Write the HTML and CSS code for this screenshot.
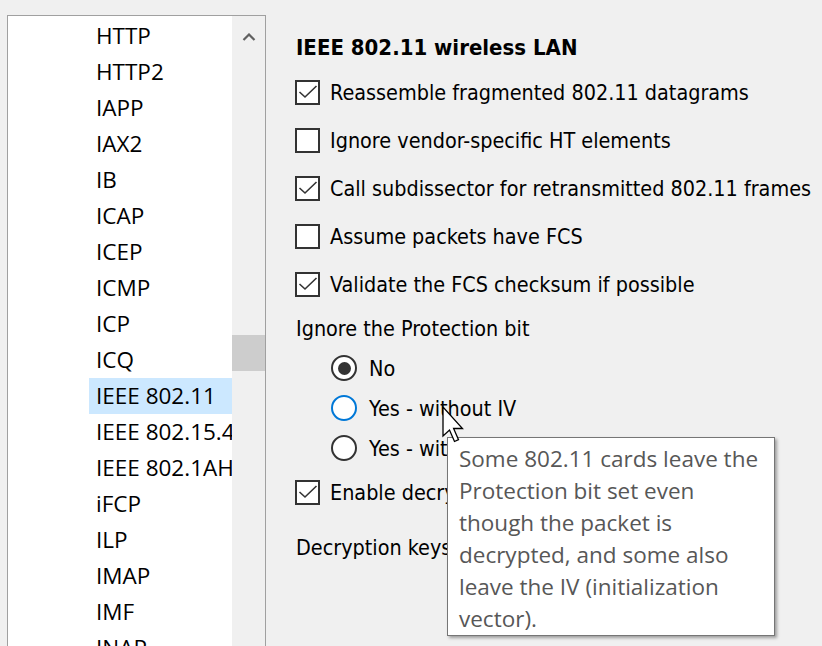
FILE: index.html
```html
<!DOCTYPE html>
<html>
<head>
<meta charset="utf-8">
<link rel="stylesheet" href="styles.css">
</head>
<body>
<div class="window">
  <div class="sidebar">
    <ul class="list">
      <li class="item">HTTP</li>
      <li class="item">HTTP2</li>
      <li class="item">IAPP</li>
      <li class="item">IAX2</li>
      <li class="item">IB</li>
      <li class="item">ICAP</li>
      <li class="item">ICEP</li>
      <li class="item">ICMP</li>
      <li class="item">ICP</li>
      <li class="item">ICQ</li>
      <li class="item selected">IEEE 802.11</li>
      <li class="item">IEEE 802.15.4</li>
      <li class="item">IEEE 802.1AH</li>
      <li class="item">iFCP</li>
      <li class="item">ILP</li>
      <li class="item">IMAP</li>
      <li class="item">IMF</li>
      <li class="item">INAP</li>
    </ul>
    <div class="scrollbar">
      <svg class="arrow-up" width="14" height="8" viewBox="0 0 14 8"><path d="M1.5 7 L7 1.5 L12.5 7" fill="none" stroke="#606060" stroke-width="2.2"/></svg>
      <div class="thumb"></div>
    </div>
  </div>

  <div class="content">
    <div class="heading">IEEE 802.11 wireless LAN</div>

    <div class="row check-row">
      <span class="box"><svg width="21" height="21" viewBox="0 0 21 21"><path d="M2.5 10 L8 15 L19.5 4" fill="none" stroke="#333" stroke-width="1.6"/></svg></span>
      <span class="label">Reassemble fragmented 802.11 datagrams</span>
    </div>
    <div class="row check-row">
      <span class="box"></span>
      <span class="label">Ignore vendor-specific HT elements</span>
    </div>
    <div class="row check-row">
      <span class="box"><svg width="21" height="21" viewBox="0 0 21 21"><path d="M2.5 10 L8 15 L19.5 4" fill="none" stroke="#333" stroke-width="1.6"/></svg></span>
      <span class="label">Call subdissector for retransmitted 802.11 frames</span>
    </div>
    <div class="row check-row">
      <span class="box"></span>
      <span class="label">Assume packets have FCS</span>
    </div>
    <div class="row check-row">
      <span class="box"><svg width="21" height="21" viewBox="0 0 21 21"><path d="M2.5 10 L8 15 L19.5 4" fill="none" stroke="#333" stroke-width="1.6"/></svg></span>
      <span class="label">Validate the FCS checksum if possible</span>
    </div>

    <div class="row group-label">Ignore the Protection bit</div>

    <div class="row radio-row">
      <span class="radio checked"><span class="dot"></span></span>
      <span class="label">No</span>
    </div>
    <div class="row radio-row">
      <span class="radio hover"></span>
      <span class="label">Yes - without IV</span>
    </div>
    <div class="row radio-row">
      <span class="radio"></span>
      <span class="label">Yes - with IV</span>
    </div>

    <div class="row check-row">
      <span class="box"><svg width="21" height="21" viewBox="0 0 21 21"><path d="M2.5 10 L8 15 L19.5 4" fill="none" stroke="#333" stroke-width="1.6"/></svg></span>
      <span class="label">Enable decryption</span>
    </div>

    <div class="row keys-label">Decryption keys</div>
  </div>

  <div class="tooltip">Some 802.11 cards leave the<br>Protection bit set even<br>though the packet is<br>decrypted, and some also<br>leave the IV (initialization<br>vector).</div>

  <svg class="cursor" width="26" height="38" viewBox="0 0 26 38">
    <path d="M1 1 L1 30 L7.5 24 L12.5 35.5 L16.5 33.7 L11.6 22.5 L20.5 22.5 Z" fill="#fff" stroke="#000" stroke-width="1.3" stroke-linejoin="miter"/>
  </svg>
</div>
</body>
</html>
```

FILE: styles.css
```css
html, body {
  margin: 0;
  padding: 0;
  background: #f0f0f0;
  overflow: hidden;
}

.window {
  position: relative;
  width: 822px;
  height: 646px;
  display: flex;
  align-items: flex-start;
  padding: 15px 0 0 7px;
  box-sizing: border-box;
}

/* ---------- left list ---------- */
.sidebar {
  flex: none;
  display: flex;
  width: 259px;
  height: 660px;
  border: 1px solid #a0a0a0;
  box-sizing: border-box;
  background: #fff;
}

.list {
  list-style: none;
  margin: 0;
  padding: 2px 0 0 0;
  width: 224px;
  flex: none;
  overflow: hidden;
  font-family: "Open Sans", "Noto Sans", sans-serif;
  font-size: 22.5px;
  color: #000;
}

.item {
  height: 36px;
  line-height: 35px;
  margin-left: 81px;
  padding-left: 7px;
  white-space: nowrap;
}

.item.selected {
  background: #cce8ff;
}

.scrollbar {
  flex: 1;
  background: #f0f0f0;
  display: flex;
  flex-direction: column;
  align-items: center;
}

.arrow-up {
  margin-top: 17px;
  display: block;
}

.thumb {
  align-self: stretch;
  margin-top: 294px;
  height: 36px;
  background: #cdcdcd;
}

/* ---------- right content ---------- */
.content {
  margin-left: 29px;
  display: flex;
  flex-direction: column;
  font-family: "DejaVu Sans Condensed", "DejaVu Sans", sans-serif;
  font-stretch: condensed;
  font-size: 21.4px;
  color: #000;
}

.heading {
  height: 36px;
  line-height: 36px;
  font-weight: bold;
  font-size: 22px;
  margin-top: 15px;
  margin-left: 1px;
  margin-bottom: 2px;
}

.row {
  display: flex;
  align-items: center;
  white-space: nowrap;
}

.check-row {
  height: 48px;
}

.box {
  flex: none;
  width: 25px;
  height: 25px;
  border: 2px solid #333;
  box-sizing: border-box;
  background: #fff;
  margin-right: 10px;
  display: flex;
}

.box svg {
  display: block;
}

.group-label {
  height: 40px;
  margin-left: 1px;
}

.radio-row {
  height: 40px;
  padding-left: 36px;
}

.radio {
  flex: none;
  width: 26px;
  height: 26px;
  border: 2px solid #333;
  border-radius: 50%;
  box-sizing: border-box;
  background: #fff;
  margin-right: 12px;
  display: flex;
  align-items: center;
  justify-content: center;
}

.radio.hover {
  border-color: #0078d7;
}

.dot {
  width: 13px;
  height: 13px;
  border-radius: 50%;
  background: #333;
}

.keys-label {
  height: 46px;
  margin-top: 8px;
  margin-left: 1px;
}

/* ---------- tooltip & cursor ---------- */
.tooltip {
  position: absolute;
  left: 447px;
  top: 437px;
  width: 328px;
  height: 199px;
  box-sizing: border-box;
  background: #fff;
  border: 1px solid #767676;
  box-shadow: 2px 2px 3px rgba(0, 0, 0, 0.35);
  padding: 5px 0 0 11px;
  font-family: "Open Sans", "Noto Sans", sans-serif;
  font-size: 22.5px;
  line-height: 32px;
  color: #575757;
  white-space: nowrap;
}

.cursor {
  position: absolute;
  left: 442px;
  top: 406px;
}
```
